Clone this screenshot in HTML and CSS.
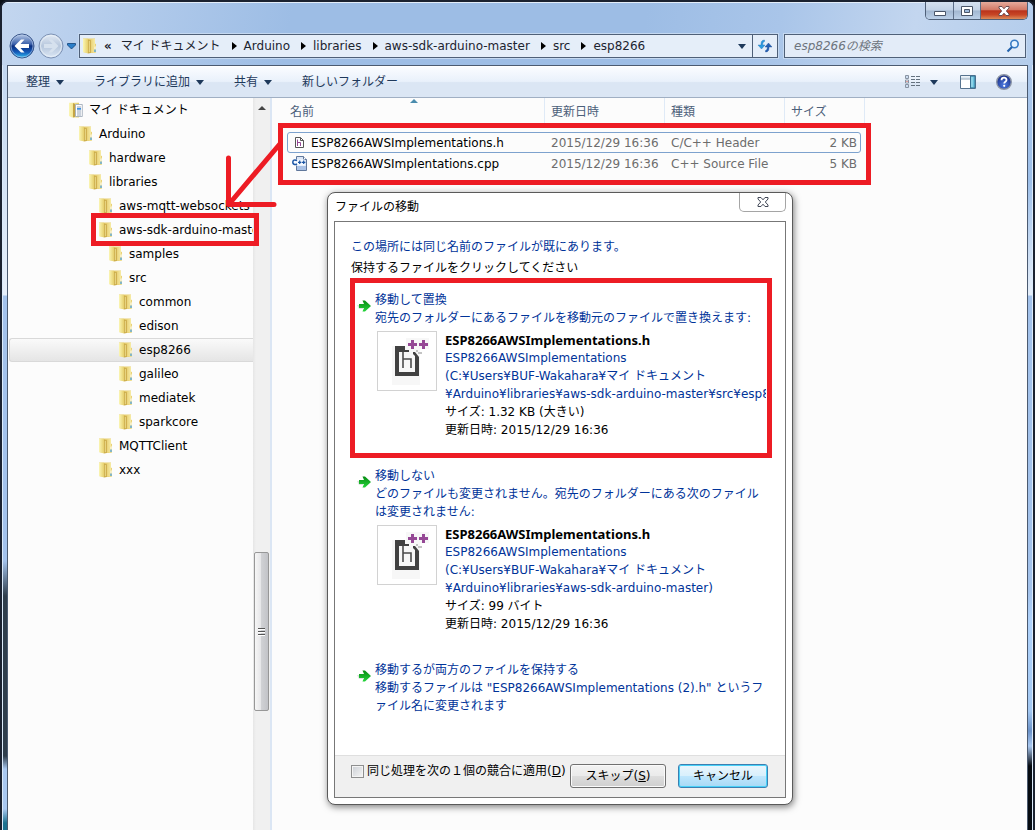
FILE: index.html
```html
<!DOCTYPE html>
<html lang="ja">
<head>
<meta charset="utf-8">
<title>esp8266</title>
<link rel="stylesheet" href="styles.css">
</head>
<body>
<svg class="defs" aria-hidden="true">
  <defs>
    <linearGradient id="gf" x1="0" x2="1" y1="0" y2="0"><stop offset="0" stop-color="#fbf6b4"/><stop offset="1" stop-color="#e6cf6c"/></linearGradient>
    <linearGradient id="gb" x1="0" x2="1" y1="0" y2="0"><stop offset="0" stop-color="#e6cc6e"/><stop offset="1" stop-color="#f7eca6"/></linearGradient>
    <linearGradient id="nav" x1="0" x2="0" y1="0" y2="1"><stop offset="0" stop-color="#b9cbe8"/><stop offset=".42" stop-color="#3d62ab"/><stop offset=".5" stop-color="#0b2f80"/><stop offset=".75" stop-color="#1459b8"/><stop offset="1" stop-color="#2fc0f2"/></linearGradient>
    <linearGradient id="navoff" x1="0" x2="0" y1="0" y2="1"><stop offset="0" stop-color="#e3ebf5"/><stop offset=".5" stop-color="#b6c6dc"/><stop offset="1" stop-color="#dbe7f5"/></linearGradient>
    <linearGradient id="green" x1="0" x2="0" y1="0" y2="1"><stop offset="0" stop-color="#078b12"/><stop offset="1" stop-color="#25d53b"/></linearGradient>
    <radialGradient id="help" cx=".5" cy=".7" r=".7"><stop offset="0" stop-color="#4f7de2"/><stop offset="1" stop-color="#14267e"/></radialGradient>
    <symbol id="folder" viewBox="0 0 14 16">
      <path d="M0 .5h12v5l1 .8v8L11.500 15H4L0 14z" fill="#e8cf74"/>
      <path d="M7 1h5v13l-5 1z" fill="url(#gb)"/>
      <path d="M0 .8h5V15.500L0 14z" fill="url(#gf)"/>
      <path d="M5 1.500l2.800.8V15L5 15.500z" fill="#c9a947"/>
      <path d="M5.800 2.500l1 .4V14l-1 .5z" fill="#efdf90"/>
      <path d="M10 8.500l3-1v7l-3 .5z" fill="#f1df8e"/>
      <path d="M12 8.500v3" stroke="#fff"/>
      <path d="M12 11.500v2.500" stroke="#3d9be9" stroke-width="1.200"/>
    </symbol>
    <symbol id="docs" viewBox="0 0 14 16">
      <path d="M0 .8H10v14.700H3L0 14z" fill="url(#gf)"/>
      <path d="M4 1l2 1v13l-2 .5z" fill="#c5a444"/>
      <path d="M6.500 2.500h6.800v12H6.500z" fill="#fff" stroke="#9aa6b4" stroke-width=".8"/>
      <path d="M8 5h4M8 9h4M8 11h4M8 13h4" stroke="#8a9bb0" stroke-width=".9"/>
      <path d="M8 6.800h4" stroke="#3e90df" stroke-width="1.700"/>
    </symbol>
    <symbol id="arrow" viewBox="0 0 14 14">
      <path d="M0 6h6v4H2z" fill="#c9d0cc" opacity=".6"/>
      <path d="M2 5h5L5.500 1.500H8L14 7l-6 5.500H5.500L7 9H2z" fill="url(#green)"/>
    </symbol>
    <symbol id="hfile" viewBox="0 0 58 58">
      <path d="M14 14h14V6h23v11h-9v36H14z" fill="#f7f7f7"/>
      <path d="M17 14h10v4h4v2H21v20h16V24l-2-2v-2h2l4 5v19H17z" fill="#414141"/>
      <path d="M25 20v16M25 27h8v9" fill="none" stroke="#4b4b4b" stroke-width="1.600"/>
      <path d="M33 8h3v3h3v3h-3v3h-3v-3h-3v-3h3zM44 8h3v3h3v3h-3v3h-3v-3h-3v-3h3z" fill="#954895"/>
      <path d="M38 18h2v2h2v2h-2v-2h-2zM42 20h2v2h-2z" fill="#c3c3c3"/>
    </symbol>
  </defs>
</svg>

<div class="window">
  <header class="titlebar">
    <div class="caption">
      <button class="cap cap-min" aria-label="最小化"><svg width="12" height="6"><path d="M.5.5h11v4H.5z" fill="#fff" stroke="#4a5568"/></svg></button>
      <button class="cap cap-max" aria-label="最大化"><svg width="12" height="10"><path d="M.5.5h11v9H.5z" fill="#fff" stroke="#4a5568"/><path d="M3.500 3.500h5v3h-5z" fill="#9db9db" stroke="#4a5568"/></svg></button>
      <button class="cap cap-close" aria-label="閉じる"><svg width="12" height="10" viewBox="0 0 12 10"><path d="M1 .5h3l2 2.300L8 .5h3v1.500L8.300 5 11 8v1.500H8L6 7.200 4 9.500H1V8l2.700-3L1 2z" fill="#fff" stroke="#5f4348" stroke-width=".9"/></svg></button>
    </div>
  </header>

  <nav class="location" aria-label="アドレス">
    <div class="history">
      <button class="bare" aria-label="戻る"><svg width="26" height="26"><circle cx="13" cy="13" r="12" fill="url(#nav)" stroke="#3a568a"/><circle cx="13" cy="13" r="11" fill="none" stroke="#b8cdec" opacity=".6"/><path d="M5.500 13l6.500-6.500h3.500L11.500 11H20v4h-8.500l4 4.500H12z" fill="#fff"/></svg></button>
      <button class="bare" aria-label="進む"><svg width="26" height="26"><circle cx="13" cy="13" r="12" fill="url(#navoff)" stroke="#7d92b4"/><circle cx="13" cy="13" r="10.500" fill="none" stroke="#edf3fa" opacity=".7"/><path d="M20.500 13L14 19.500h-3.500l4-4.500H6v-4h8.500l-4-4.500H14z" fill="#d6e1ee"/></svg></button>
      <button class="bare" aria-label="最近のページ"><svg width="9" height="7"><path d="M.5.5h8v1.500L4.500 6 .5 2z" fill="#2b7fca" stroke="#124377" stroke-width=".8"/></svg></button>
    </div>
    <div class="address">
      <svg class="address-icon" width="14" height="16"><use href="#folder"/></svg>
      <button class="crumb first">«</button>
      <button class="crumb">マイ ドキュメント</button><i class="tri-r"></i>
      <button class="crumb">Arduino</button><i class="tri-r"></i>
      <button class="crumb">libraries</button><i class="tri-r"></i>
      <button class="crumb">aws-sdk-arduino-master</button><i class="tri-r"></i>
      <button class="crumb">src</button><i class="tri-r"></i>
      <button class="crumb">esp8266</button>
      <button class="bare drop" aria-label="履歴"><i class="tri-d"></i></button>
      <button class="bare refresh" aria-label="更新"><svg width="16" height="16"><path d="M7.500 2C4.500 2 4 4 4 7H1l3.500 4L8 7H5.700C5.700 5 6 4 7.500 3.500z" fill="#2c9be0" stroke="#2171b4" stroke-width=".4"/><path d="M8.500 14c3 0 3.500-2 3.500-5h3l-3.500-4L8 9h2.300c0 2-.3 3-1.800 3.500z" fill="#245fb3" stroke="#1c4d95" stroke-width=".4"/></svg></button>
    </div>
    <label class="search">
      <input type="search" placeholder="esp8266の検索" aria-label="esp8266の検索">
      <svg width="14" height="14"><circle cx="8.500" cy="5" r="3.700" fill="#e6f3ff" stroke="#377bc4" stroke-width="1.600"/><path d="M6 8L1.500 12.500" stroke="#2362ac" stroke-width="2.200"/></svg>
    </label>
  </nav>

  <div class="client">
    <div class="toolbar">
      <button class="tool">整理<i class="tri-d"></i></button>
      <button class="tool">ライブラリに追加<i class="tri-d"></i></button>
      <button class="tool">共有<i class="tri-d"></i></button>
      <button class="tool">新しいフォルダー</button>
      <div class="tool-right">
        <button class="tool view" aria-label="表示"><svg width="16" height="14"><path d="M.5.5h3v3h-3zM.5 5h3v3h-3zM.5 9.500h3v3h-3z" fill="#fff" stroke="#8793a3"/><path d="M1.500 2h1M1.500 11h1" stroke="#3b79c5"/><path d="M1.500 6.500h1" stroke="#c03c3c"/><path d="M6 1.500h4M11 1.500h4M6 4.500h4M11 4.500h4M6 7.500h4M11 7.500h4M6 10.500h4M11 10.500h4" stroke="#65727f"/></svg><i class="tri-d"></i></button>
        <button class="tool" aria-label="プレビュー"><svg width="16" height="14"><path d="M.5.5h15v13H.5z" fill="#fff" stroke="#56738f"/><path d="M1 1.500h14v2H1z" fill="#dce8f2"/><path d="M1 4h9" stroke="#8ba2b8"/><path d="M10.500 1h4.500v12h-4.500z" fill="#66bfdc" stroke="#376f91"/><path d="M12 2v10" stroke="#b3e5f2"/></svg></button>
        <button class="tool help" aria-label="ヘルプ"><svg width="16" height="16"><circle cx="8" cy="8" r="7.300" fill="url(#help)" stroke="#8c95a6" stroke-width="1.400"/><path d="M5.500 6.200C5.500 2.800 10.600 3 10.500 6c0 1.800-2.300 1.700-2.300 3.500" fill="none" stroke="#fff" stroke-width="1.800"/><circle cx="8.200" cy="11.800" r="1.100" fill="#fff"/></svg></button>
      </div>
    </div>

    <div class="panes">
      <ul class="tree">
        <li class="node l0"><svg width="14" height="16"><use href="#docs"/></svg>マイ ドキュメント</li>
        <li class="node l1"><svg width="14" height="16"><use href="#folder"/></svg>Arduino</li>
        <li class="node l2"><svg width="14" height="16"><use href="#folder"/></svg>hardware</li>
        <li class="node l2"><svg width="14" height="16"><use href="#folder"/></svg>libraries</li>
        <li class="node l3"><svg width="14" height="16"><use href="#folder"/></svg>aws-mqtt-websockets-</li>
        <li class="node l3"><svg width="14" height="16"><use href="#folder"/></svg>aws-sdk-arduino-master</li>
        <li class="node l4"><svg width="14" height="16"><use href="#folder"/></svg>samples</li>
        <li class="node l4"><svg width="14" height="16"><use href="#folder"/></svg>src</li>
        <li class="node l5"><svg width="14" height="16"><use href="#folder"/></svg>common</li>
        <li class="node l5"><svg width="14" height="16"><use href="#folder"/></svg>edison</li>
        <li class="node l5 selected"><svg width="14" height="16"><use href="#folder"/></svg>esp8266</li>
        <li class="node l5"><svg width="14" height="16"><use href="#folder"/></svg>galileo</li>
        <li class="node l5"><svg width="14" height="16"><use href="#folder"/></svg>mediatek</li>
        <li class="node l5"><svg width="14" height="16"><use href="#folder"/></svg>sparkcore</li>
        <li class="node l3"><svg width="14" height="16"><use href="#folder"/></svg>MQTTClient</li>
        <li class="node l3"><svg width="14" height="16"><use href="#folder"/></svg>xxx</li>
      </ul>
      <div class="scrollbar">
        <i class="tri-u"></i>
        <div class="thumb"><svg width="8" height="8"><path d="M0 .5h7M0 3.500h7M0 6.500h7" stroke="#555"/><path d="M0 1.500h7M0 4.500h7M0 7.500h7" stroke="#fff"/></svg></div>
      </div>
      <main class="list">
        <table class="files">
          <colgroup><col class="c-name"><col class="c-date"><col class="c-kind"><col class="c-size"></colgroup>
          <thead><tr><th>名前<svg class="sort" width="8" height="4"><path d="M4 0l4 4H0z" fill="#4a8cad"/></svg></th><th>更新日時</th><th>種類</th><th>サイズ</th></tr></thead>
          <tbody>
            <tr class="focus"><td><span class="file"><svg width="16" height="16"><path d="M3.500 2.500h5l3 3v7h-8z" fill="#fff" stroke="#555"/><path d="M8.500 2.500v3h3" fill="none" stroke="#555"/><path d="M5.500 4.500V11M5.500 7.500h3V11" fill="none" stroke="#954895"/></svg>ESP8266AWSImplementations.h</span></td><td>2015/12/29 16:36</td><td>C/C++ Header</td><td>2 KB</td></tr>
            <tr><td><span class="file"><svg width="16" height="16"><path d="M4.500.5h7l3 3v11h-10z" fill="#dce7f6" stroke="#60779b"/><path d="M5 10h9v4H5z" fill="#a9c1e5"/><path d="M11.500.5v3h3" fill="#fff" stroke="#60779b"/><path d="M0 3.500h13v6H0z" fill="#f4f9ff"/><path d="M5 4.700C2.500 3 .8 4.500.8 6.200S2.500 9.500 5 7.800" fill="none" stroke="#1b55a5" stroke-width="1.500"/><path d="M6 6.300h3.400M7.700 4.500V8M10 6.300h3.400M11.700 4.500V8" stroke="#1b55a5" stroke-width="1.200"/></svg>ESP8266AWSImplentations.cpp</span></td><td>2015/12/29 16:36</td><td>C++ Source File</td><td>5 KB</td></tr>
          </tbody>
        </table>
      </main>
    </div>
  </div>

  <section class="dialog" role="dialog" aria-labelledby="dlg-title">
    <div class="dialog-bar">
      <h1 id="dlg-title">ファイルの移動</h1>
      <button class="dialog-close" aria-label="閉じる"><svg width="12" height="10" viewBox="0 0 12 10"><path d="M1 .5h3l2 2.300L8 .5h3v1.500L8.300 5 11 8v1.500H8L6 7.200 4 9.500H1V8l2.700-3L1 2z" fill="#fff" stroke="#424857"/></svg></button>
    </div>
    <div class="dialog-frame">
      <div class="dialog-body">
        <p class="lead">この場所には同じ名前のファイルが既にあります。</p>
        <p class="hint">保持するファイルをクリックしてください</p>
        <button class="choice">
          <svg class="go" width="14" height="14"><use href="#arrow"/></svg>
          <span class="choice-text">
            <span class="line">移動して置換</span>
            <span class="line">宛先のフォルダーにあるファイルを移動元のファイルで置き換えます:</span>
            <span class="detail">
              <svg class="preview" width="58" height="58"><use href="#hfile"/></svg>
              <span class="meta">
                <b class="line">ESP8266AWSImplementations.h</b>
                <span class="line">ESP8266AWSImplementations</span>
                <span class="line">(C:¥Users¥BUF-Wakahara¥マイ ドキュメント</span>
                <span class="line">¥Arduino¥libraries¥aws-sdk-arduino-master¥src¥esp8266)</span>
                <span class="line dark">サイズ: 1.32 KB (大きい)</span>
                <span class="line dark">更新日時: 2015/12/29 16:36</span>
              </span>
            </span>
          </span>
        </button>
        <button class="choice">
          <svg class="go" width="14" height="14"><use href="#arrow"/></svg>
          <span class="choice-text">
            <span class="line">移動しない</span>
            <span class="line">どのファイルも変更されません。宛先のフォルダーにある次のファイル<br>は変更されません:</span>
            <span class="detail">
              <svg class="preview" width="58" height="58"><use href="#hfile"/></svg>
              <span class="meta">
                <b class="line">ESP8266AWSImplementations.h</b>
                <span class="line">ESP8266AWSImplementations</span>
                <span class="line">(C:¥Users¥BUF-Wakahara¥マイ ドキュメント</span>
                <span class="line">¥Arduino¥libraries¥aws-sdk-arduino-master)</span>
                <span class="line dark">サイズ: 99 バイト</span>
                <span class="line dark">更新日時: 2015/12/29 16:36</span>
              </span>
            </span>
          </span>
        </button>
        <button class="choice">
          <svg class="go" width="14" height="14"><use href="#arrow"/></svg>
          <span class="choice-text">
            <span class="line">移動するが両方のファイルを保持する</span>
            <span class="line">移動するファイルは "ESP8266AWSImplementations (2).h" というフ<br>ァイル名に変更されます</span>
          </span>
        </button>
      </div>
      <div class="dialog-foot">
        <label class="apply"><input type="checkbox"><span>同じ処理を次の１個の競合に適用(<u>D</u>)</span></label>
        <button class="btn skip"><span>スキップ(<u>S</u>)</span></button>
        <button class="btn cancel">キャンセル</button>
      </div>
    </div>
  </section>

  <svg class="marks" width="1035" height="830" fill="none" stroke="#ed1c24" stroke-width="5" aria-hidden="true">
    <path d="M280.500 125.500h588v57h-588zM93.500 215.500h163v28h-163zM352.500 280.500h417v175h-417z"/>
    <path d="M228.500 158v46.500H274M279 145l-49 58" stroke-linecap="round" stroke-linejoin="round"/>
  </svg>
</div>
</body>
</html>
```
FILE: styles.css
```css
* { box-sizing: border-box; }

body {
  margin: 0;
  background: #0c1118;
  font: 12px/18px "DejaVu Sans", "Noto Sans CJK JP", sans-serif;
  color: #000;
}

button {
  font: inherit;
  color: inherit;
  padding: 0;
  border: 0;
  background: none;
}

svg { display: block; flex: none; }
i { display: block; flex: none; }
ul { list-style: none; margin: 0; padding: 0; }
.defs { position: absolute; width: 0; height: 0; }

.tri-r { border: 4px solid transparent; border-left: 5px solid #000; border-right: 0; }
.tri-d { border: 4px solid transparent; border-top: 5px solid #1e395b; border-bottom: 0; }
.tri-u { border: 4px solid transparent; border-bottom: 4px solid #444; border-top: 0; }

.window {
  position: relative;
  display: flex;
  flex-direction: column;
  min-height: 100vh;
  padding: 0 5px 0 5px;
  border: 2px solid #1b2230;
  border-bottom: 0;
  border-radius: 8px 8px 0 0;
  overflow: hidden;
  background:
    linear-gradient(#dcebfb, #dcebfb) left / 1px 100% no-repeat,
    linear-gradient(#dcebfb, #dcebfb) right / 1px 100% no-repeat,
    linear-gradient(#b7cfee 0, #e6effa 294px, #a3c2eb 295px, #a3c2eb 560px, #2f3e4c 595px, #2f3e4c 755px, #a9c8f0 768px, #a9c8f0 808px, #1e7290 822px) left / 5px 830px no-repeat,
    linear-gradient(#b7cfee 0, #9dbfe9 180px, #e6effa 294px, #a3c2eb 295px, #a3c2eb 590px, #afd2fb 620px, #a3c8f2 710px, #6b92c8 730px, #a9c8f0 745px, #060b11 765px) right / 5px 830px no-repeat,
    #a3c2eb;
}

.titlebar {
  display: flex;
  justify-content: flex-end;
  height: 28px;
}

.titlebar, .location { margin: 0 -4px; }

.window::before {
  content: "";
  position: absolute;
  inset: 0 0 auto;
  height: 62px;
  border-top: 1px solid #e3edf9;
  background: linear-gradient(100deg, #c3d6ef 0, #b5cdec 10%, #9dbde5 28%, #9dbde5 62%, #a9c5e9 75%, #c3d6ef 88%, #b4cdec);
}

.titlebar, .location, .client { position: relative; }

.caption {
  display: flex;
  height: 18px;
  margin-right: 4px;
  border: 1px solid #4f6078;
  border-top: 0;
  border-radius: 0 0 5px 5px;
  overflow: hidden;
}

.cap {
  display: grid;
  place-items: center;
  width: 28px;
  border-right: 1px solid #5d6e88;
  background: linear-gradient(#d5e1f0, #c2d2e6 48%, #a2b7d1 52%, #bcd0e8);
}
.cap-min { padding-top: 6px; }
.cap-max { width: 27px; }
.cap-close {
  width: 46px;
  border-right: 0;
  background: linear-gradient(#e5ab9c, #d27966 45%, #ba331b 52%, #c74625 75%, #dc8c5a);
}

.location {
  display: flex;
  height: 34px;
  gap: 6px;
  padding: 4px 6px 6px 6px;
}

.history {
  display: flex;
  align-items: center;
  gap: 3px;
  width: 64px;
}

.address {
  display: flex;
  align-items: center;
  flex: 1;
  min-width: 0;
  border: 1px solid #4f6078;
  background: #e5eef9;
  box-shadow: 0 0 0 1px #c5d9f1;
  overflow: hidden;
}
.address-icon { margin-left: 3px; }
.crumb { margin-left: 7px; white-space: nowrap; color: #1c2430; }
.crumb.first { margin: 0 2px 0 7px; font-weight: bold; }
.crumb + .tri-r { margin-left: 11px; }
.drop { display: grid; place-items: center; width: 21px; height: 100%; margin-left: auto; }
.refresh {
  display: grid;
  place-items: center;
  width: 25px;
  height: 100%;
  border-left: 1px solid #4f6078;
}

.search {
  display: flex;
  align-items: center;
  flex: none;
  width: 242px;
  padding: 0 5px 0 9px;
  border: 1px solid #4f6078;
  background: #e3ecf8;
  box-shadow: 0 0 0 1px #c5d9f1;
}
.search input {
  flex: 1;
  min-width: 0;
  padding: 0;
  border: 0;
  background: none;
  font: inherit;
}
.search input::placeholder { color: #6d747d; font-style: italic; opacity: 1; }

.client {
  display: flex;
  flex-direction: column;
  flex: 1;
  margin-top: 1px;
  border: 1px solid #4b5a70;
  border-bottom: 0;
  background: #fcfcfc;
}

.toolbar {
  display: flex;
  align-items: center;
  gap: 30px;
  height: 32px;
  padding: 0 15px 0 18px;
  border-top: 1px solid #fff;
  border-bottom: 1px solid #a0afc3;
  background: linear-gradient(#fafcff, #e9f1fb 48%, #dbe6f4 52%, #dbe6f4);
  color: #1e395b;
}
.tool { display: flex; align-items: center; gap: 6px; white-space: nowrap; }
.tool-right { display: flex; align-items: center; gap: 20px; margin-left: auto; }
.view { gap: 9px; margin-right: 2px; }

.panes { display: flex; flex: 1; }

.tree {
  width: 245px;
  flex: none;
  overflow: hidden;
}
.node {
  display: flex;
  align-items: center;
  gap: 6px;
  height: 24px;
  white-space: nowrap;
}
.l0 { padding-left: 61px; }
.l1 { padding-left: 71px; }
.l2 { padding-left: 81px; }
.l3 { padding-left: 91px; }
.l4 { padding-left: 101px; }
.l5 { padding-left: 111px; }
.selected {
  margin-left: 1px;
  padding-left: 109px;
  border: 1px solid #d9d9d9;
  border-right: 0;
  border-radius: 3px 0 0 3px;
  background: linear-gradient(#fafafa, #e5e5e5);
}

.scrollbar {
  display: flex;
  flex-direction: column;
  align-items: center;
  flex: none;
  width: 17px;
  padding-top: 8px;
  background: linear-gradient(90deg, #e6e6e6, #f0f0f0 3px);
}
.thumb {
  display: grid;
  place-items: center;
  width: 15px;
  height: 159px;
  margin-top: 442px;
  border: 1px solid #979797;
  border-radius: 2px;
  background: linear-gradient(90deg, #f6f6f6, #e6e6e8 45%, #d0d1d4 50%, #c2c3c7);
}

.list {
  flex: 1;
  min-width: 0;
  padding-left: 15px;
  border-left: 2px solid #dbe6f4;
}

.files {
  table-layout: fixed;
  width: 578px;
  border-collapse: separate;
  border-spacing: 0;
}
.c-name { width: 258px; }
.c-date, .c-kind { width: 120px; }
.c-size { width: 80px; }
.files th {
  position: relative;
  height: 26px;
  padding: 2px 0 0 6px;
  border-right: 1px solid #dfeaf7;
  font-weight: normal;
  text-align: left;
  color: #4c607a;
}
.files th:first-child { padding-left: 3px; }
.sort { position: absolute; top: 1px; left: 123px; }
.files thead::after { content: ""; display: block; height: 8px; }
.files td {
  height: 21px;
  padding: 0 0 0 6px;
  color: #6d6d6d;
  white-space: nowrap;
}
.files td:first-child { padding-left: 5px; color: #000; }
.files td:last-child { padding-right: 8px; text-align: right; }
.file { display: flex; align-items: center; gap: 3px; }
.focus { position: relative; }
.focus::after {
  content: "";
  position: absolute;
  inset: 0 4px 0 0;
  border: 1px solid #7da2ce;
  border-radius: 3px;
}

.dialog {
  position: absolute;
  top: 190px;
  left: 325px;
  width: 466px;
  padding: 0 6px 6px;
  border: 1px solid #5a5a5a;
  border-radius: 8px;
  background: #fff;
  box-shadow: 1px 2px 7px rgba(0, 0, 0, .5);
}
.dialog-bar {
  display: flex;
  justify-content: space-between;
  align-items: flex-start;
  height: 28px;
}
.dialog-bar h1 { margin: 5px 0 0 1px; font-size: 12px; font-weight: normal; }
.dialog-close {
  display: grid;
  place-items: center;
  width: 47px;
  height: 19px;
  border: 1px solid #a5a5a5;
  border-top: 0;
  border-radius: 0 0 5px 5px;
}
.dialog-frame { border: 1px solid #777; }
.dialog-body { padding: 16px 19px 40px 16px; }
.dialog-body p { margin: 0; }
.lead { color: #003399; }
.dialog-body .hint { margin: 3px 0 14px; }

.choice {
  display: flex;
  gap: 4px;
  width: 100%;
  padding-left: 6px;
  text-align: left;
  color: #003399;
}
.choice + .choice { margin-top: 28px; }
.go { margin-top: 8px; }
.choice-text { flex: 1; min-width: 0; overflow: hidden; }
.line { display: block; white-space: nowrap; }
.dark { color: #000; }
.detail { display: flex; gap: 8px; margin-top: 4px; padding-left: 2px; }
.preview { box-sizing: content-box; border: 1px solid #d2d2d2; align-self: flex-start; }
.meta { min-width: 0; }
.meta b { color: #000; font: bold 13px/18px "Noto Sans", sans-serif; }

.dialog-foot {
  display: flex;
  align-items: flex-start;
  height: 42px;
  padding: 8px 17px 0 16px;
  border-top: 1px solid #dfdfdf;
  background: #f0f0f0;
}
.apply { display: flex; align-items: flex-start; gap: 3px; margin-right: auto; white-space: nowrap; }
.apply input {
  appearance: none;
  width: 13px;
  height: 13px;
  margin: 1px 0 0;
  border: 1px solid #8e8f8f;
  background: linear-gradient(135deg, #cbcfd5, #f6f6f6);
  box-shadow: inset 0 0 0 1px #f4f4f4;
}
.apply span { margin-top: -2px; }
.btn {
  height: 24px;
  border: 1px solid #707070;
  border-radius: 3px;
  background: linear-gradient(#f2f2f2, #ebebeb 48%, #dddddd 52%, #cfcfcf);
  box-shadow: inset 0 0 0 1px #fafafa;
}
.skip { width: 96px; margin-right: 12px; }
.cancel {
  width: 90px;
  border-color: #3c7fb1;
  background: linear-gradient(#eaf6fd, #d9f0fc 48%, #bee6fd 52%, #a7d9f5);
  box-shadow: inset 0 0 0 1px #48d1f8;
}

.marks { position: absolute; top: -2px; left: -2px; pointer-events: none; }
```
